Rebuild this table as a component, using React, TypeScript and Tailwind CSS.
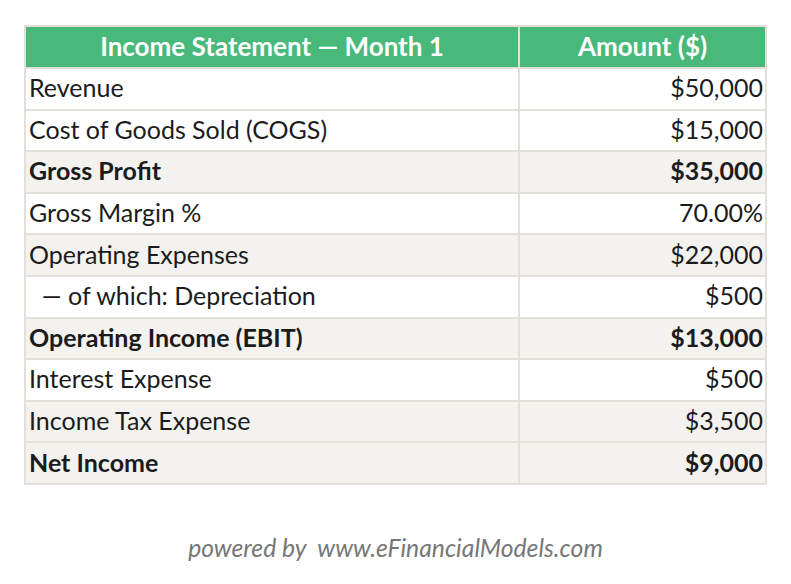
import React from "react";

const rows: { label: string; value: string; bold?: boolean; gray?: boolean }[] = [
  { label: "Revenue", value: "$50,000" },
  { label: "Cost of Goods Sold (COGS)", value: "$15,000" },
  { label: "Gross Profit", value: "$35,000", bold: true, gray: true },
  { label: "Gross Margin %", value: "70.00%" },
  { label: "Operating Expenses", value: "$22,000", gray: true },
  { label: "\u00a0\u00a0— of which: Depreciation", value: "$500" },
  { label: "Operating Income (EBIT)", value: "$13,000", bold: true, gray: true },
  { label: "Interest Expense", value: "$500" },
  { label: "Income Tax Expense", value: "$3,500", gray: true },
  { label: "Net Income", value: "$9,000", bold: true, gray: true },
];

export default function App() {
  return (
    <div
      className="w-[791px] h-[584px] bg-white pt-[25px] pl-[24px]"
      style={{ fontFamily: "Lato, 'Noto Sans', sans-serif" }}
    >
      <table className="border-collapse w-[743px] text-[25px] text-[#1b1b1b]">
        <thead>
          <tr className="h-[42px] bg-[#48b97a] text-white text-[26px]">
            <th className="border-2 border-[#e3e0db] font-bold w-[494px] p-0 pb-[2px] leading-none">
              Income Statement — Month 1
            </th>
            <th className="border-2 border-[#e3e0db] font-bold p-0 pb-[2px] leading-none">Amount ($)</th>
          </tr>
        </thead>
        <tbody>
          {rows.map((r) => (
            <tr
              key={r.label}
              className={`h-[41.6px] ${r.gray ? "bg-[#f3f2ef]" : "bg-white"} ${r.bold ? "font-bold" : "font-normal"}`}
            >
              <td className="border-2 border-[#e3e0db] pl-[3px] pt-0 pb-[2px] leading-none whitespace-pre">{r.label}</td>
              <td className="border-2 border-[#e3e0db] pr-[2px] pt-0 pb-[2px] text-right leading-none">{r.value}</td>
            </tr>
          ))}
        </tbody>
      </table>
      <div className="w-[743px] mt-[44px] text-center italic text-[24.7px] text-[#777777] whitespace-pre">
        powered by  www.eFinancialModels.com
      </div>
    </div>
  );
}
